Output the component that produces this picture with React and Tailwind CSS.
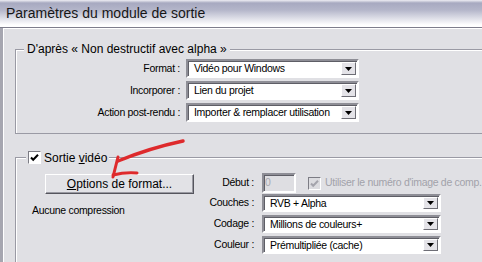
import React from 'react';

const sunken =
  'border-2 border-t-[#8e8e96] border-l-[#8e8e96] border-r-white border-b-white shadow-[inset_1px_1px_0_#5e5e66]';

function Select({ value, w, h }) {
  return (
    <div className={`flex ${w} ${h} bg-white ${sunken}`}>
      <span className="flex-1 pl-[6px] leading-none flex items-center whitespace-nowrap overflow-hidden">{value}</span>
      <span className="m-[1px] w-[15px] flex items-center justify-center bg-[#e4e3e8] border border-t-white border-l-white border-r-[#6e6e76] border-b-[#6e6e76]">
        <svg width="7" height="4" viewBox="0 0 7 4">
          <path d="M0 0h7L3.5 4z" fill="#000" />
        </svg>
      </span>
    </div>
  );
}

function Check({ disabled }) {
  return (
    <span
      className={`w-[13px] h-[13px] flex items-center justify-center border border-t-[#7c7c84] border-l-[#7c7c84] border-r-white border-b-white ${
        disabled ? 'bg-[#dcdce0]' : 'bg-white'
      }`}
    >
      <svg width="9" height="9" viewBox="0 0 9 9">
        <path d="M1 4.5l2.2 2.3L8 1.8" fill="none" stroke={disabled ? '#a4a4ac' : '#000'} strokeWidth="2" />
      </svg>
    </span>
  );
}

const rows = [
  ['Format :', 'Vidéo pour Windows'],
  ['Incorporer :', 'Lien du projet'],
  ['Action post-rendu :', 'Importer & remplacer utilisation'],
];

const outRows = [
  ['Couches :', 'RVB + Alpha'],
  ['Codage :', 'Millions de couleurs+'],
  ['Couleur :', 'Prémultipliée (cache)'],
];

export default function App() {
  return (
    <div className="relative w-[482px] h-[262px] overflow-hidden bg-[#e0e0e4] text-[10.5px] tracking-[-0.3px] text-black font-['Liberation_Sans',Arial,sans-serif]">
      {/* title bar */}
      <div className="h-[28px] flex items-center pl-[6px] border-b border-[#7e7e8c] bg-[linear-gradient(to_bottom,#eeeef4_0px,#a7a9c0_3px,#b4b6ca_10px,#ffffff_25px)]">
        <span className="text-[14px] tracking-normal text-[#161616]">Paramètres du module de sortie</span>
      </div>

      <div className="flex h-full">
        <div className="w-[4px] shrink-0 bg-[#a6a6b0] border-r border-white" />
        <div className="flex-1 min-w-0 border-t border-white pl-[11px]">
          {/* preset group */}
          <fieldset className="mt-[13px] w-[480px] border border-[#9a9aa4] shadow-[inset_1px_1px_0_#fff] pt-[3px] pb-[11px]">
            <legend className="ml-[8px] px-[3px] text-[12px] tracking-normal leading-[14px] bg-[#e0e0e4]">
              D'après « Non destructif avec alpha »
            </legend>
            <div className="flex flex-col gap-[3px]">
              {rows.map(([label, value]) => (
                <div key={label} className="flex items-center gap-[6px]">
                  <span className="w-[164px] text-right whitespace-nowrap">{label}</span>
                  <Select value={value} w="w-[173px]" h="h-[19px]" />
                </div>
              ))}
            </div>
          </fieldset>

          {/* video output group */}
          <fieldset className="mt-[16px] w-[480px] h-[140px] border border-[#9a9aa4] shadow-[inset_1px_1px_0_#fff]">
            <legend className="ml-[10px] px-[2px] flex items-center gap-[3px] h-[15px] text-[12px] tracking-normal bg-[#e0e0e4]">
              <Check />
              <span>
                Sortie <span className="underline">v</span>idéo
              </span>
            </legend>
            <div className="flex">
              <div className="w-[183px] shrink-0 flex flex-col">
                <button className="mt-[9px] ml-[29px] w-[149px] h-[20px] text-[12px] tracking-normal bg-[#e2e2e6] border border-t-white border-l-white border-r-[#55555d] border-b-[#55555d] shadow-[inset_-1px_-1px_0_#9a9aa2]">
                  <span className="underline">O</span>ptions de format...
                </button>
                <span className="ml-[16px] mt-[9px] leading-[14px]">Aucune compression</span>
              </div>
              <div className="flex flex-col gap-[3px] pt-[8px]">
                <div className="flex items-center h-[20px] -mb-[2px]">
                  <span className="w-[55px] text-right">Début :</span>
                  <div className={`ml-[8px] w-[34px] h-[20px] bg-[#dedee2] text-[#a8a8b0] pl-[1px] flex items-center ${sunken}`}>0</div>
                  <span className="ml-[12px]">
                    <Check disabled />
                  </span>
                  <span className="ml-[4px] text-[#a2a2aa] whitespace-nowrap">Utiliser le numéro d'image de comp.</span>
                </div>
                {outRows.map(([label, value]) => (
                  <div key={label} className="flex items-center">
                    <span className="w-[55px] text-right whitespace-nowrap">{label}</span>
                    <div className="ml-[8px]">
                      <Select value={value} w="w-[179px]" h="h-[18px]" />
                    </div>
                  </div>
                ))}
              </div>
            </div>
          </fieldset>
        </div>
      </div>

      {/* red annotation arrow */}
      <svg className="absolute left-0 top-0 pointer-events-none" width="482" height="262" viewBox="0 0 482 262">
        <g fill="none" stroke="#de2a2c" strokeLinecap="round" strokeLinejoin="round">
          <path d="M183 141 Q150 148 118 161" strokeWidth="3.5" />
          <path d="M118 157 L113 177" strokeWidth="3" />
          <path d="M113 175 Q125 172 137 173" strokeWidth="3" />
        </g>
      </svg>
    </div>
  );
}
